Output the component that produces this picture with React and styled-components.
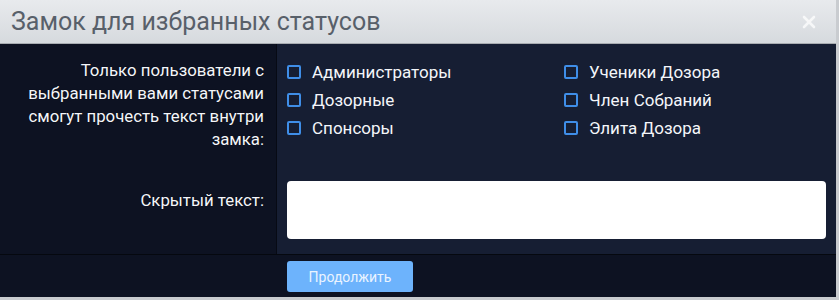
import styled, { createGlobalStyle } from "styled-components";

const GlobalStyle = createGlobalStyle`
    html, body {
        margin: 0;
        padding: 0;
        background: #c9ccd0;
        font-family: Roboto, "Liberation Sans", sans-serif;
    }
`;

const Dialog = styled.div`
    width: 836px;
    height: 297px;
    display: flex;
    flex-direction: column;
    background: #0d1222;
    overflow: hidden;
`;

const Header = styled.div`
    height: 44px;
    box-sizing: border-box;
    display: flex;
    align-items: center;
    justify-content: space-between;
    padding: 0 20px 0 11px;
    background: linear-gradient(to bottom, #e8eaed, #d6dade);
    border-bottom: 1px solid #a8acb1;
`;

const Title = styled.h1`
    margin: 0;
    font-size: 25px;
    font-weight: 400;
    color: #58606a;
`;

const Close = styled.button`
    border: 0;
    background: none;
    padding: 0;
    width: 14px;
    height: 14px;
    opacity: 0.75;
    cursor: pointer;
`;

const Body = styled.div`
    display: grid;
    grid-template-columns: 277px 1fr;
    border-bottom: 1px solid #05080f;
`;

const LabelCell = styled.div`
    background: #0d1222;
    border-right: 1px solid #070a14;
    padding: ${(p) => p.$top}px 12px 0 0;
    text-align: right;
    color: #f4f6fa;
    font-size: 16.8px;
    line-height: 23px;
    text-shadow: 0 0 1px rgba(0, 0, 0, 0.6);
`;

const FieldCell = styled.div`
    background: #161e33;
    padding: ${(p) => p.$top}px 10px ${(p) => p.$bottom}px 10px;
`;

const Options = styled.div`
    display: grid;
    grid-template-columns: 277px 1fr;
    grid-auto-flow: column;
    grid-template-rows: repeat(3, 28px);
`;

const Option = styled.label`
    display: flex;
    align-items: center;
    gap: 11px;
    color: #f4f6fa;
    font-size: 17px;
    cursor: pointer;
`;

const Box = styled.span`
    width: 14px;
    height: 14px;
    box-sizing: border-box;
    border: 2px solid #3f8ee8;
    border-radius: 2px;
`;

const TextArea = styled.textarea`
    display: block;
    width: 100%;
    height: 58px;
    box-sizing: border-box;
    border: 0;
    border-radius: 4px;
    background: #ffffff;
    resize: none;
    outline: none;
`;

const Footer = styled.div`
    flex: 1;
    padding: 6px 0 0 287px;
`;

const Button = styled.button`
    width: 126px;
    height: 31px;
    border: 0;
    border-radius: 3px;
    background: #6db3fc;
    color: #eaf3ff;
    font-family: Roboto, "Liberation Sans", sans-serif;
    font-size: 14px;
    cursor: pointer;
`;

const statuses = [
    "Администраторы",
    "Дозорные",
    "Спонсоры",
    "Ученики Дозора",
    "Член Собраний",
    "Элита Дозора",
];

const App = () => {
    return (
        <>
            <GlobalStyle />
            <Dialog>
                <Header>
                    <Title>Замок для избранных статусов</Title>
                    <Close aria-label="close">
                        <svg width="14" height="14" viewBox="0 0 14 14">
                            <path d="M2 2L12 12M12 2L2 12" stroke="#ffffff" strokeWidth="2.6" strokeLinecap="round" />
                        </svg>
                    </Close>
                </Header>
                <Body>
                    <LabelCell $top={15}>
                        Только пользователи с<br />
                        выбранными вами статусами<br />
                        смогут прочесть текст внутри<br />
                        замка:
                    </LabelCell>
                    <FieldCell $top={14} $bottom={0}>
                        <Options>
                            {statuses.map((s) => (
                                <Option key={s}>
                                    <Box />
                                    {s}
                                </Option>
                            ))}
                        </Options>
                    </FieldCell>
                    <LabelCell $top={38}>Скрытый текст:</LabelCell>
                    <FieldCell $top={30} $bottom={15}>
                        <TextArea />
                    </FieldCell>
                </Body>
                <Footer>
                    <Button>Продолжить</Button>
                </Footer>
            </Dialog>
        </>
    );
};

export default App;
